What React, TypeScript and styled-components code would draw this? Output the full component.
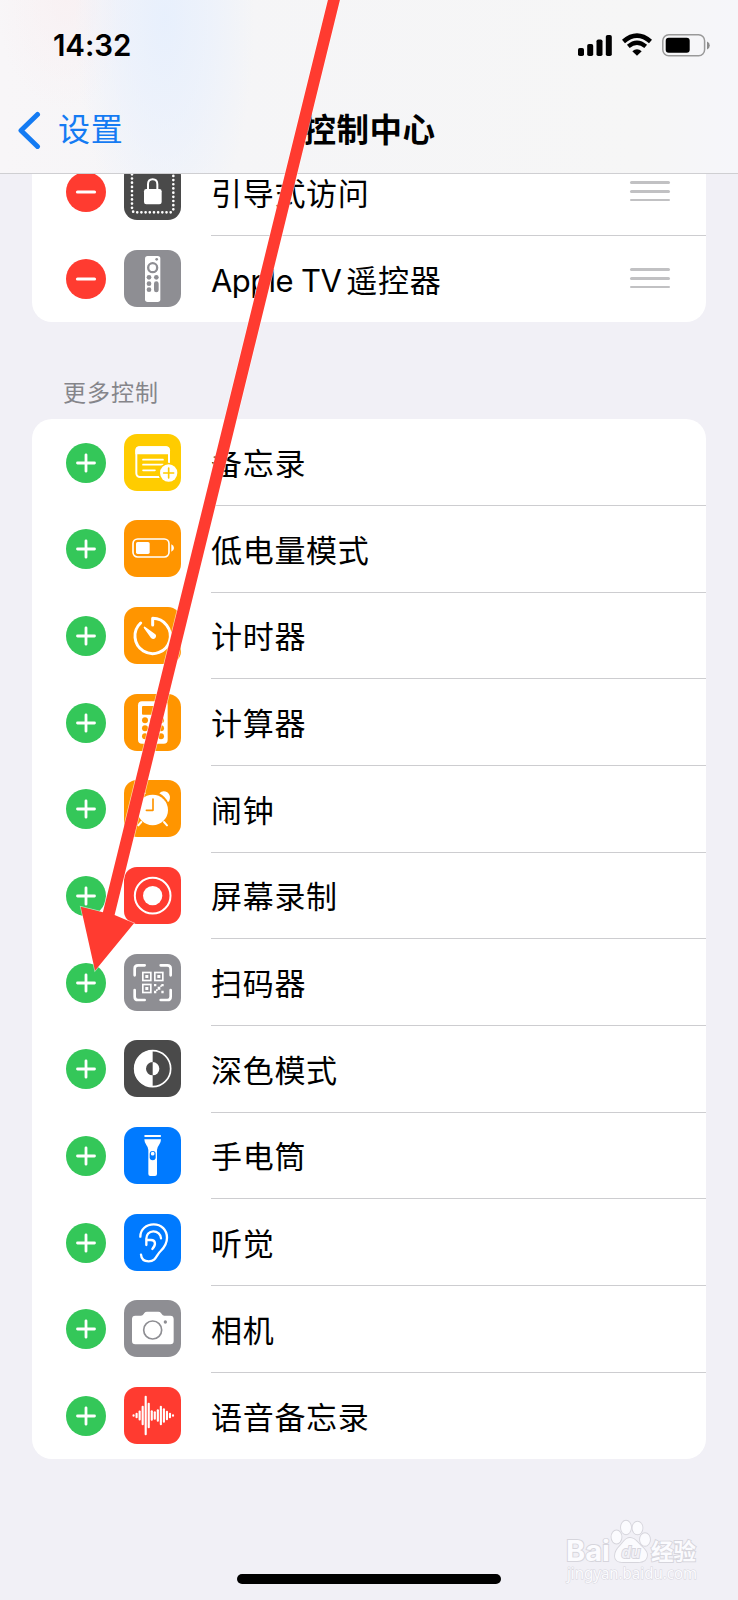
import React from "react";
import styled, { createGlobalStyle } from "styled-components";

const RED = "#ff3b30";
const GREEN = "#34c759";
const ORANGE = "#ff9500";
const GRAY = "#8e8e93";
const DARK = "#4a4a4a";
const BLUE = "#007aff";
const YELLOW = "#ffcc00";

const GlobalStyle = createGlobalStyle`
  * { box-sizing: border-box; }
  body { margin: 0; background: #f1f0f6; }
`;

const Screen = styled.div`
  position: relative;
  width: 738px;
  height: 1600px;
  overflow: hidden;
  display: flex;
  flex-direction: column;
  background: #f1f0f6;
  color: #000;
  font-family: Inter, "Noto Sans CJK SC", sans-serif;
`;

const Header = styled.header`
  flex: none;
  height: 174px;
  display: flex;
  flex-direction: column;
  border-bottom: 1px solid #cfcfd2;
  background:
    radial-gradient(ellipse 90px 230px at 165px 20px, rgba(230, 239, 253, 0.9), rgba(232, 240, 253, 0.6) 50%, rgba(238, 243, 252, 0) 100%),
    radial-gradient(ellipse 70px 110px at 66px 0, rgba(249, 240, 242, 0.8), rgba(249, 241, 243, 0) 100%),
    linear-gradient(90deg, #f8f6f8 0, #f5f5f7 220px, #f6f6f6 640px, #f6f6fa 738px);
`;

const StatusBar = styled.div`
  height: 90px;
  padding: 0 28px 0 53px;
  display: flex;
  align-items: center;
  justify-content: space-between;
`;

const Clock = styled.span`
  font-size: 29.5px;
  font-weight: 600;
  letter-spacing: -0.1px;
  line-height: 36px;
`;

const StatusIcons = styled.svg`
  display: block;
  width: 132px;
  height: 24px;
`;

const NavBar = styled.nav`
  height: 83px;
  padding: 0 17px 3px;
  display: grid;
  grid-template-columns: 1fr auto 1fr;
  align-items: center;
`;

const Back = styled.a`
  display: flex;
  align-items: center;
  gap: 17px;
  color: #147bf3;
  font-size: 32px;
  line-height: 40px;
  letter-spacing: 0.8px;
`;

const BackArrow = styled.svg`
  width: 24px;
  height: 38px;
`;

const Title = styled.h1`
  margin: 0;
  padding: 2px 0 0 1px;
  font-size: 32.5px;
  font-weight: 600;
  line-height: 40px;
  letter-spacing: 0.5px;
`;

const Scroller = styled.main`
  flex: 1;
  overflow: hidden;
  padding: 0 32px;
`;

const Card = styled.section<{ $continued?: boolean }>`
  margin-top: ${(p) => (p.$continued ? "-25px" : "0")};
  background: #fff;
  border-radius: ${(p) => (p.$continued ? "0 0 20px 20px" : "20px")};
  overflow: hidden;
`;

const Row = styled.div`
  height: 86.67px;
  padding-left: 33.6px;
  display: flex;
  align-items: center;
`;

const Toggle = styled.svg`
  flex: none;
  width: 40px;
  height: 40px;
  margin-right: 18.4px;
`;

const Tile = styled.svg<{ $color: string }>`
  flex: none;
  width: 57px;
  height: 57px;
  margin: -1px 30px 0 0;
  border-radius: 13px;
  background: ${(p) => p.$color};
`;

const Label = styled.div<{ $divided: boolean }>`
  flex: 1;
  align-self: stretch;
  display: flex;
  align-items: center;
  justify-content: space-between;
  padding: 0 36px 1px 0;
  font-size: 31px;
  letter-spacing: 0.7px;
  white-space: nowrap;
  border-bottom: ${(p) => (p.$divided ? "1px solid #cdcdd0" : "none")};
`;

const Latin = styled.span`
  letter-spacing: -0.6px;
  margin-right: 5px;
`;

const Handle = styled.span`
  width: 40px;
  height: 20px;
  display: flex;
  flex-direction: column;
  justify-content: space-between;
  &::before, &::after { content: ""; }
  &::before, &::after, i { display: block; height: 2.6px; border-radius: 2px; background: #c1c1c3; }
`;

const SectionTitle = styled.h2`
  margin: 0;
  height: 97px;
  padding: 54px 0 0 31px;
  font-size: 23px;
  font-weight: 400;
  line-height: 34px;
  letter-spacing: 1px;
  color: #85858a;
`;

const HomeIndicator = styled.div`
  flex: none;
  align-self: center;
  width: 264px;
  height: 10px;
  margin-bottom: 16px;
  border-radius: 5px;
  background: #000;
`;

const Arrow = styled.svg`
  position: absolute;
  left: 0;
  top: 0;
  width: 738px;
  height: 1000px;
  pointer-events: none;
`;

const Watermark = styled.svg`
  position: absolute;
  left: 560px;
  top: 1514px;
  width: 150px;
  height: 76px;
`;

const NotesIcon = () => (
  <>
    <rect x="37" y="40" width="98" height="89" rx="11" fill="none" stroke="#fff" strokeWidth="6" />
    <path d="M34 61V49a12 12 0 0 1 12-12h80a12 12 0 0 1 12 12v12z" fill="#fff" />
    <path d="M57 77h60M57 92h60M57 109h36" stroke="#fff" strokeWidth="5" strokeLinecap="round" />
    <circle cx="134" cy="117" r="31" fill={YELLOW} />
    <circle cx="134" cy="117" r="26" fill="#fff" />
    <path d="M119 117h30M134 102v30" stroke={YELLOW} strokeWidth="5" strokeLinecap="round" />
  </>
);

const BatteryIcon = () => (
  <>
    <rect x="27" y="57" width="108" height="54" rx="14" fill="none" stroke="#fff" strokeWidth="5" />
    <rect x="36" y="66" width="41" height="36" rx="5" fill="#fff" />
    <path d="M142 73q8 4 8 11t-8 11z" fill="#fff" />
  </>
);

const TimerIcon = () => (
  <>
    <path d="M86 54V34A53 53 0 1 1 50 48" fill="none" stroke="#fff" strokeWidth="9" strokeLinecap="round" strokeLinejoin="round" />
    <path d="M60 59q2-1 4 1l29 21q6 5 1 12-6 6-13 0L59 62z" fill="#fff" />
  </>
);

const CalculatorIcon = () => (
  <>
    <rect x="42" y="22" width="89" height="127" rx="12" fill="#fff" />
    <rect x="54" y="36" width="65" height="26" rx="3" fill={ORANGE} />
    {[79, 103, 127].map((y) =>
      [63, 87, 111].map((x) => <circle key={`${x}-${y}`} cx={x} cy={y} r="9" fill={ORANGE} />)
    )}
  </>
);

const AlarmIcon = () => (
  <>
    <circle cx="86" cy="90" r="46" fill="#fff" />
    <path d="M106 40q10-10 24-3 12 10 6 25l-4 5Q124 50 106 40z" fill="#fff" />
    <path d="M66 40q-10-10-24-3-12 10-6 25l4 5Q48 50 66 40z" fill="#fff" />
    <path d="M52 126l-9 10M120 126l9 10" stroke="#fff" strokeWidth="6" strokeLinecap="round" />
    <path d="M87 57v34H67" fill="none" stroke={ORANGE} strokeWidth="5" strokeLinecap="round" strokeLinejoin="round" />
  </>
);

const RecordIcon = () => (
  <>
    <circle cx="86" cy="86" r="53.5" fill="none" stroke="#fff" strokeWidth="6" />
    <circle cx="86" cy="86" r="29" fill="#fff" />
  </>
);

const ScannerIcon = () => (
  <>
    <path
      d="M32 64V44q0-10 10-10h20M110 34h20q10 0 10 10v20M140 108v20q0 10-10 10h-20M62 138H42q-10 0-10-10v-20"
      fill="none"
      stroke="#fff"
      strokeWidth="8"
      strokeLinecap="round"
    />
    {[[54, 53], [90, 53], [54, 89]].map(([x, y]) => (
      <g key={`${x}-${y}`}>
        <rect x={x + 2.5} y={y + 2.5} width="24" height="24" fill="none" stroke="#fff" strokeWidth="5" />
        <rect x={x + 10} y={y + 10} width="9" height="9" fill="#fff" />
      </g>
    ))}
    <path d="M90 90h7v7h-7zM112 90h7v7h-7zM101 98h8v9h-8zM90 110h7v8h-7zM112 110h7v8h-7zM96 106h5v5h-5zM109 94h4v5h-4z" fill="#fff" />
  </>
);

const DarkModeIcon = () => (
  <>
    <circle cx="86" cy="86" r="54" fill="none" stroke="#fff" strokeWidth="5" />
    <path d="M86 31a55 55 0 0 0 0 110v-35a20 20 0 0 1 0-40z" fill="#fff" />
    <path d="M86 66a20 20 0 0 1 0 40z" fill="#fff" />
  </>
);

const FlashlightIcon = () => (
  <>
    <rect x="61" y="24" width="50" height="6" rx="2" fill="#fff" />
    <path d="M61 37h50q0 9-6 17-6 7-6 15v72q0 6-6 6H79q-6 0-6-6V69q0-8-6-15-6-8-6-17z" fill="#fff" />
    <rect x="77" y="72" width="18" height="28" rx="9" fill={BLUE} />
    <circle cx="86" cy="80" r="5.5" fill="#fff" />
  </>
);

const EarIcon = () => (
  <path
    d="M49 68C49 46 67 31 89 31c23 0 40 17 40 40 0 18-8 29-19 40-14 13-13 31-36 31-14 0-22-8-23-20M67 93V74c0-12 8-22 21-22 12 0 23 9 23 21M67 78h14c14 0 16 14 4 27"
    fill="none"
    stroke="#fff"
    strokeWidth="7"
    strokeLinecap="round"
    strokeLinejoin="round"
  />
);

const CameraIcon = () => (
  <>
    <path d="M34 47h17q5 0 8-5l2-3q3-4 8-4h34q5 0 8 4l2 3q3 5 8 5h18q10 0 10 10v66q0 10-10 10H34q-10 0-10-10V57q0-10 10-10z" fill="#fff" />
    <circle cx="86" cy="90" r="27" fill="none" stroke={GRAY} strokeWidth="5" />
    <circle cx="124" cy="66" r="5" fill={GRAY} />
  </>
);

const voiceBars = [7, 17, 30, 58, 118, 76, 32, 26, 38, 58, 43, 29, 17, 8];

const VoiceIcon = () => (
  <>
    {voiceBars.map((h, i) => (
      <rect key={i} x={25.5 + i * 9.1} y={85.5 - h / 2} width="6.4" height={h} rx="3" fill="#fff" />
    ))}
  </>
);

const GuidedAccessIcon = () => (
  <>
    <rect x="24" y="24" width="124" height="124" rx="9" fill="none" stroke="#fff" strokeWidth="8" strokeLinecap="round" strokeDasharray="0 12.55" />
    <rect x="60" y="78" width="53" height="46" rx="7" fill="#fff" />
    <path d="M72 80V64q0-15 14-15t14 15v16" fill="none" stroke="#fff" strokeWidth="6" />
  </>
);

const RemoteIcon = () => (
  <>
    <rect x="63" y="18" width="46" height="138" rx="8" fill="#fff" />
    <circle cx="98" cy="28" r="4" fill={GRAY} />
    <circle cx="86" cy="53" r="13.5" fill="none" stroke={GRAY} strokeWidth="7" />
    {[[75, 82], [97, 82], [75, 101], [75, 119]].map(([x, y]) => (
      <circle key={`${x}-${y}`} cx={x} cy={y} r="7" fill={GRAY} />
    ))}
    <rect x="90" y="94" width="14" height="33" rx="7" fill={GRAY} />
  </>
);

type Control = { name: React.ReactNode; color: string; icon: React.ComponentType };

const included: Control[] = [
  { name: "引导式访问", color: DARK, icon: GuidedAccessIcon },
  { name: <><Latin>Apple TV</Latin>遥控器</>, color: GRAY, icon: RemoteIcon },
];

const more: Control[] = [
  { name: "备忘录", color: YELLOW, icon: NotesIcon },
  { name: "低电量模式", color: ORANGE, icon: BatteryIcon },
  { name: "计时器", color: ORANGE, icon: TimerIcon },
  { name: "计算器", color: ORANGE, icon: CalculatorIcon },
  { name: "闹钟", color: ORANGE, icon: AlarmIcon },
  { name: "屏幕录制", color: RED, icon: RecordIcon },
  { name: "扫码器", color: GRAY, icon: ScannerIcon },
  { name: "深色模式", color: DARK, icon: DarkModeIcon },
  { name: "手电筒", color: BLUE, icon: FlashlightIcon },
  { name: "听觉", color: BLUE, icon: EarIcon },
  { name: "相机", color: GRAY, icon: CameraIcon },
  { name: "语音备忘录", color: RED, icon: VoiceIcon },
];

function ControlRow({ control, removable, last }: { control: Control; removable?: boolean; last: boolean }) {
  const Icon = control.icon;
  return (
    <Row>
      <Toggle viewBox="0 0 40 40">
        <circle cx="20" cy="20" r="20" fill={removable ? RED : GREEN} />
        <path
          d={removable ? "M11.5 20h17" : "M11.5 20h17M20 11.8v16.4"}
          stroke="#fff"
          strokeWidth={removable ? 3.2 : 2.8}
          strokeLinecap="round"
        />
      </Toggle>
      <Tile $color={control.color} viewBox="0 0 171 171">
        <Icon />
      </Tile>
      <Label $divided={!last}>
        <span>{control.name}</span>
        {removable && <Handle><i /></Handle>}
      </Label>
    </Row>
  );
}

export default function App() {
  return (
    <Screen>
      <GlobalStyle />
      <Header>
        <StatusBar>
          <Clock>14:32</Clock>
          <StatusIcons viewBox="0 0 132 24">
            <rect x="0" y="15" width="6" height="8" rx="1.8" />
            <rect x="9.2" y="11" width="6" height="12" rx="1.8" />
            <rect x="18.5" y="6.5" width="6" height="16.5" rx="1.8" />
            <rect x="27.8" y="2" width="6" height="21" rx="1.8" />
            <path d="M45.5 8.4Q59 -3.2 72.5 8.4" fill="none" stroke="#000" strokeWidth="4.6" />
            <path d="M50.3 13.4Q59 6 67.7 13.4" fill="none" stroke="#000" strokeWidth="4.2" />
            <path d="M54.3 18.2Q59 14.4 63.7 18.2L59 22.8z" />
            <rect x="84.8" y="1.8" width="41.8" height="21" rx="6" fill="none" stroke="#999" strokeWidth="1.5" />
            <rect x="87.7" y="4.8" width="24" height="15" rx="3" />
            <path d="M129 8.5q2.8 1.2 2.8 4t-2.8 4z" fill="#8c8c8c" />
          </StatusIcons>
        </StatusBar>
        <NavBar>
          <Back>
            <BackArrow viewBox="0 0 24 38">
              <path d="M20.5 3.5L4 19.5l16.5 16" fill="none" stroke="#147bf3" strokeWidth="5" strokeLinecap="round" strokeLinejoin="round" />
            </BackArrow>
            设置
          </Back>
          <Title>控制中心</Title>
        </NavBar>
      </Header>
      <Scroller>
        <Card $continued>
          {included.map((c, i) => (
            <ControlRow key={i} control={c} removable last={i === included.length - 1} />
          ))}
        </Card>
        <SectionTitle>更多控制</SectionTitle>
        <Card>
          {more.map((c, i) => (
            <ControlRow key={i} control={c} last={i === more.length - 1} />
          ))}
        </Card>
      </Scroller>
      <HomeIndicator />
      <Watermark viewBox="0 0 150 76" fill="#fbfbfe" stroke="#d6d5dc" strokeWidth="1.8" paintOrder="stroke">
        <text x="6" y="46.5" fontFamily="Inter" fontSize="28" fontWeight="700" textLength="44" lengthAdjust="spacingAndGlyphs">Bai</text>
        <ellipse cx="56.5" cy="23" rx="5" ry="6.5" />
        <ellipse cx="66" cy="13.5" rx="5" ry="6.8" />
        <ellipse cx="77.5" cy="14" rx="5" ry="6.3" />
        <ellipse cx="85" cy="25.5" rx="5" ry="6.3" />
        <path d="M70 24c-5 0-7 5-10 8s-5 6-5 10c0 5 4 6 8 6h15c5 0 9-2 9-7 0-4-3-6-6-9s-6-8-11-8z" />
        <text x="61.5" y="44" fontFamily="Liberation Sans" fontSize="17" fontWeight="700" fontStyle="italic" fill="#f1f0f6" textLength="19" lengthAdjust="spacingAndGlyphs">du</text>
        <text x="91" y="46" fontFamily="Noto Sans CJK SC" fontSize="22.5" fontWeight="700" textLength="45">经验</text>
        <text x="7" y="65" fontFamily="Noto Sans" fontSize="15.5" strokeWidth="1" textLength="130" lengthAdjust="spacingAndGlyphs">jingyan.baidu.com</text>
      </Watermark>
      <Arrow viewBox="0 0 738 1000">
        <path
          d="M329.4 -6L102.9 912.2L80.7 906.7L95 970.7L134 923.3L114.6 915L341.4 -6z"
          fill={RED}
          stroke="#fff"
          strokeOpacity="0.6"
          strokeWidth="1.4"
          paintOrder="stroke"
        />
      </Arrow>
    </Screen>
  );
}
